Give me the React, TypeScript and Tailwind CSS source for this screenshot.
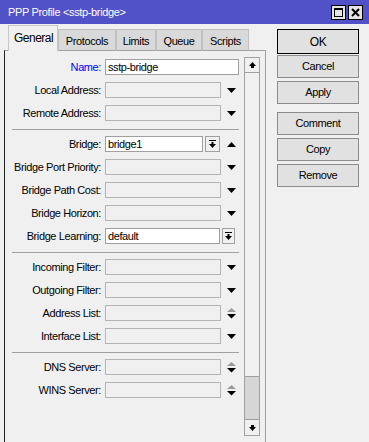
import React from "react";

const Down = () => (
  <svg width="9" height="5" viewBox="0 0 9 5" className="block">
    <path d="M0 0H9L4.5 5Z" fill="#000" />
  </svg>
);
const Up = () => (
  <svg width="9" height="5" viewBox="0 0 9 5" className="block">
    <path d="M0 5H9L4.5 0Z" fill="#000" />
  </svg>
);
const Double = () => (
  <svg width="9" height="11" viewBox="0 0 9 11" className="block">
    <path d="M0 4H9L4.5 0Z" fill="#9a9a9a" />
    <path d="M0 6H9L4.5 10.5Z" fill="#000" />
  </svg>
);
const BarDown = () => (
  <svg width="7" height="8" viewBox="0 0 7 8" className="block">
    <rect x="0" y="0" width="7" height="1" fill="#000" />
    <rect x="2.5" y="2" width="2" height="2" fill="#000" />
    <path d="M0 4H7L3.5 8Z" fill="#000" />
  </svg>
);

type Kind = "full" | "arrow" | "double" | "bridge" | "learning";

function Row({ label, kind, value, blue }: { label: string; kind: Kind; value?: string; blue?: boolean }) {
  const white = kind === "full" || kind === "bridge" || kind === "learning";
  const w =
    kind === "full" ? "w-[134px]" : kind === "bridge" ? "w-[98px]" : kind === "learning" ? "w-[115px]" : "w-[116px]";
  return (
    <div className="flex items-center h-[16px]">
      <div className={blue ? "w-[96px] text-right text-[#0000ff]" : "w-[96px] text-right text-black"}>{label}</div>
      <div
        className={
          (white ? "bg-white border-[#a0a0a0] " : "bg-[#f0f0f0] border-[#b4b4b4] ") +
          w +
          " ml-[4px] h-[16px] border flex items-center pl-[2px] text-black"
        }
      >
        {value}
      </div>
      {kind === "arrow" && (
        <div className="ml-[6px]">
          <Down />
        </div>
      )}
      {kind === "double" && (
        <div className="ml-[6px]">
          <Double />
        </div>
      )}
      {kind === "bridge" && (
        <>
          <div className="ml-[2px] w-[15px] h-[16px] border border-[#a0a0a0] bg-[#f0f0f0] flex items-center justify-center">
            <BarDown />
          </div>
          <div className="ml-[7px]">
            <Up />
          </div>
        </>
      )}
      {kind === "learning" && (
        <div className="ml-[2px] w-[13px] h-[16px] border border-[#a0a0a0] bg-[#f0f0f0] flex items-center justify-center">
          <BarDown />
        </div>
      )}
    </div>
  );
}

const Sep = () => <div className="ml-[7px] w-[227px] h-px bg-[#a0a0a0] mt-[8px] mb-[6px]" />;

function Btn({ children, ok }: { children: React.ReactNode; ok?: boolean }) {
  return (
    <div
      className={
        ok
          ? "h-[25px] border border-black bg-[#e1e1e1] flex items-center justify-center text-black text-[12px]"
          : "h-[23px] border border-[#8c8c8c] bg-[#e1e1e1] flex items-center justify-center text-black"
      }
    >
      {children}
    </div>
  );
}

export default function App() {
  return (
    <div className="w-[369px] h-[442px] bg-[#f0f0f0] overflow-hidden font-['Liberation_Sans',Arial,sans-serif] text-[11px] tracking-[-0.4px] leading-none">
      {/* title bar */}
      <div className="h-[24px] bg-[#5151c8] flex items-center pl-[8px] pr-[6px]">
        <span className="text-white tracking-[-0.35px]">PPP Profile &lt;sstp-bridge&gt;</span>
        <div className="ml-auto flex gap-[2px] pt-[1px]">
          <div className="w-[15px] h-[15px] border border-black bg-[#e4e4e4] flex items-center justify-center">
            <div className="w-[9px] h-[9px] border border-black border-t-2" />
          </div>
          <div className="w-[15px] h-[15px] border border-black bg-[#e4e4e4] flex items-center justify-center">
            <svg width="9" height="9" viewBox="0 0 9 9">
              <path d="M1 1L8 8M8 1L1 8" stroke="#000" strokeWidth="2" />
            </svg>
          </div>
        </div>
      </div>
      <div className="flex">
        {/* left: tabs + panel */}
        <div className="w-[267px]">
          <div className="flex items-end h-[27px] pl-[8px] -mb-px relative z-10">
            <div className="w-[50px] h-[26px] bg-[#f0f0f0] border-t border-l border-r border-[#c8c8c8] flex items-start pt-[6px] pl-[5px] text-black text-[12px] tracking-[-0.5px]">
              General
            </div>
            <div className="w-[58px] h-[22px] bg-[#d9d9d9] border border-[#c0c0c0] border-b-[#a0a0a0] flex items-start justify-center pt-[6px]">
              Protocols
            </div>
            <div className="w-[40px] h-[22px] bg-[#d9d9d9] border border-[#c0c0c0] border-b-[#a0a0a0] flex items-start justify-center pt-[6px]">
              Limits
            </div>
            <div className="w-[46px] h-[22px] bg-[#d9d9d9] border border-[#c0c0c0] border-b-[#a0a0a0] flex items-start justify-center pt-[6px]">
              Queue
            </div>
            <div className="w-[47px] h-[22px] bg-[#d9d9d9] border border-[#c0c0c0] border-b-[#a0a0a0] flex items-start justify-center pt-[6px]">
              Scripts
            </div>
          </div>
          <div className="ml-[4px] w-[262px] h-[400px] border-l border-t border-r border-l-[#202020] border-t-[#a0a0a0] border-r-[#a0a0a0] flex">
            <div className="w-[234px] pt-[8px] flex flex-col">
              <div className="flex flex-col gap-[7px]">
                <Row label="Name:" kind="full" value="sstp-bridge" blue />
                <Row label="Local Address:" kind="arrow" />
                <Row label="Remote Address:" kind="arrow" />
              </div>
              <Sep />
              <div className="flex flex-col gap-[7px]">
                <Row label="Bridge:" kind="bridge" value="bridge1" />
                <Row label="Bridge Port Priority:" kind="arrow" />
                <Row label="Bridge Path Cost:" kind="arrow" />
                <Row label="Bridge Horizon:" kind="arrow" />
                <Row label="Bridge Learning:" kind="learning" value="default" />
              </div>
              <Sep />
              <div className="flex flex-col gap-[7px]">
                <Row label="Incoming Filter:" kind="arrow" />
                <Row label="Outgoing Filter:" kind="arrow" />
                <Row label="Address List:" kind="double" />
                <Row label="Interface List:" kind="arrow" />
              </div>
              <Sep />
              <div className="flex flex-col gap-[7px]">
                <Row label="DNS Server:" kind="double" />
                <Row label="WINS Server:" kind="double" />
              </div>
            </div>
            {/* scrollbar */}
            <div className="ml-[5px] mt-[6px] w-[16px] h-[379px] border border-[#a0a0a0] bg-[#f0f0f0] flex flex-col">
              <div className="h-[15px] border-b border-[#a0a0a0] flex items-center justify-center">
                <svg width="7" height="6" viewBox="0 0 7 6">
                  <path d="M0 4H7L3.5 0Z" fill="#000" />
                  <rect x="2" y="4" width="3" height="2" fill="#000" />
                </svg>
              </div>
              <div className="flex-1" />
              <div className="h-[43px] bg-[#d6d6d6] border-t border-[#a0a0a0]" />
              <div className="h-[16px] border-t border-[#a0a0a0] flex items-center justify-center">
                <svg width="7" height="6" viewBox="0 0 7 6">
                  <rect x="2" y="0" width="3" height="2" fill="#000" />
                  <path d="M0 2H7L3.5 6Z" fill="#000" />
                </svg>
              </div>
            </div>
          </div>
        </div>
        {/* right buttons */}
        <div className="ml-[10px] mt-[5px] w-[82px] flex flex-col">
          <Btn ok>OK</Btn>
          <div className="mt-[1px] flex flex-col gap-[3px]">
            <Btn>Cancel</Btn>
            <Btn>Apply</Btn>
          </div>
          <div className="mt-[8px] flex flex-col gap-[3px]">
            <Btn>Comment</Btn>
            <Btn>Copy</Btn>
            <Btn>Remove</Btn>
          </div>
        </div>
      </div>
    </div>
  );
}
